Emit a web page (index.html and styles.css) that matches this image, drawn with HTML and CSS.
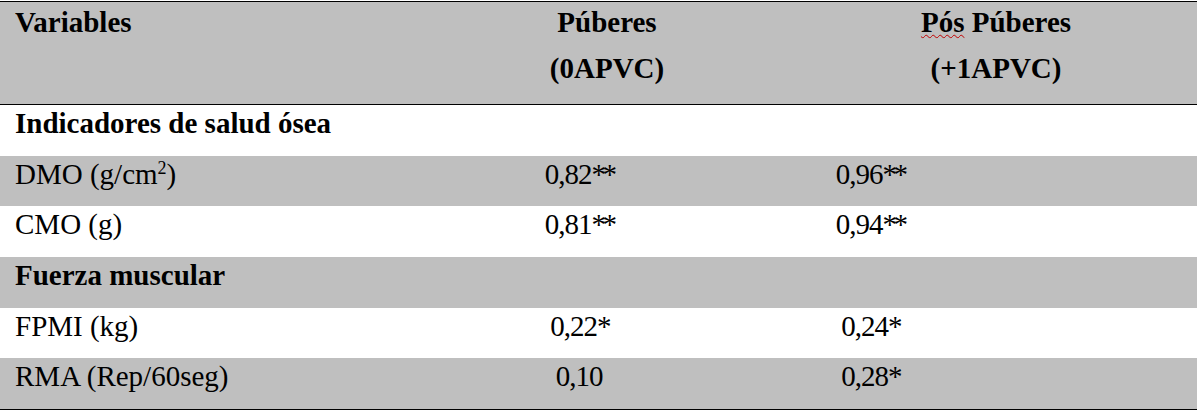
FILE: index.html
```html
<!DOCTYPE html>
<html lang="es">
<head>
    <meta charset="UTF-8">
    <meta name="viewport" content="width=device-width, initial-scale=1.0">
    <title>Variables - Púberes / Pós Púberes</title>
    <link rel="stylesheet" href="styles.css">
</head>
<body>
    <div class="data-table">
        <!-- header: merged cells span differently than the body columns -->
        <div class="row head">
            <div class="cell">Variables</div>
            <div class="cell col-b-head">
                <div class="line">Púberes</div>
                <div class="line">(0APVC)</div>
            </div>
            <div class="cell col-c-head">
                <div class="line"><span class="spell">Pós</span> Púberes</div>
                <div class="line">(+1APVC)</div>
            </div>
        </div>

        <div class="row section">
            <div class="cell full">Indicadores de salud ósea</div>
        </div>
        <div class="row shaded">
            <div class="cell">DMO (g/cm<sup>2</sup>)</div>
            <div class="cell num col-b">0,82<span class="star">**</span></div>
            <div class="cell num col-c">0,96<span class="star">**</span></div>
        </div>
        <div class="row">
            <div class="cell">CMO (g)</div>
            <div class="cell num col-b">0,81<span class="star">**</span></div>
            <div class="cell num col-c">0,94<span class="star">**</span></div>
        </div>

        <div class="row section shaded">
            <div class="cell full">Fuerza muscular</div>
        </div>
        <div class="row">
            <div class="cell">FPMI (kg)</div>
            <div class="cell num col-b">0,22<span class="star">*</span></div>
            <div class="cell num col-c">0,24<span class="star">*</span></div>
        </div>
        <div class="row shaded last">
            <div class="cell">RMA (Rep/60seg)</div>
            <div class="cell num col-b">0,10</div>
            <div class="cell num col-c">0,28<span class="star">*</span></div>
        </div>
    </div>
</body>
</html>
```

FILE: styles.css
```css
body { margin: 0; padding: 1px 1px 0 0; background: #fff; color: #000; font-family: "Liberation Serif", "Times New Roman", serif; font-size: 29px; }

.data-table { border-top: 1px solid #000; }

/* five tracks so header and body cells can merge like in the word table */
.row { display: grid; grid-template-columns: 419px 320px 56px 206px 1fr; }
.row.shaded, .row.head { background-color: #bfbfbf; }

.cell { padding: 0 15px 14.67px; line-height: 36px; white-space: nowrap; }
.cell.full { grid-column: 1 / 6; }

.head { height: 102px; border-bottom: 1px solid #000; font-weight: bold; }
.head .cell { padding-top: 1.5px; padding-bottom: 0; }
.head .line + .line { margin-top: 10px; }
.col-b-head { grid-column: 2 / 4; text-align: center; }
.col-c-head { grid-column: 4 / 6; text-align: center; }

.section { font-weight: bold; }
.last { border-bottom: 1px solid #000; }

.num { text-align: center; padding-left: 0; padding-right: 0; letter-spacing: -1px; }
.num .star { letter-spacing: -3.5px; }
.col-b { grid-column: 2 / 3; }
.col-c { grid-column: 3 / 5; }

sup { font-size: 0.62em; line-height: 0; vertical-align: 0.55em; }

/* spell-check squiggle from the source document */
.spell { text-decoration: underline wavy #c00000; text-decoration-thickness: 1px; text-underline-offset: 2px; }
```
